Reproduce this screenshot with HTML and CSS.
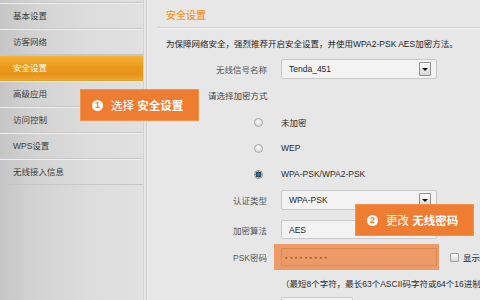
FILE: index.html
```html
<!DOCTYPE html>
<html lang="zh-CN">
<head>
<meta charset="utf-8">
<title>安全设置</title>
<link rel="stylesheet" href="styles.css">
</head>
<body>
<div class="page">
  <aside class="sidebar">
    <div class="nav-top"></div>
    <div class="nav-item">基本设置</div>
    <div class="nav-item">访客网络</div>
    <div class="nav-item active">安全设置</div>
    <div class="nav-item">高级应用</div>
    <div class="nav-item">访问控制</div>
    <div class="nav-item">WPS设置</div>
    <div class="nav-item">无线接入信息</div>
  </aside>
  <div class="divider"></div>
  <main class="main">
    <div class="head"><h1 class="title">安全设置</h1></div>
    <p class="desc">为保障网络安全，强烈推荐开启安全设置，并使用WPA2-PSK AES加密方法。</p>
    <div class="row r-ssid">
      <span class="lbl">无线信号名称</span>
      <div class="select"><span>Tenda_451</span><span class="dd"></span></div>
    </div>
    <p class="sub">请选择加密方式</p>
    <div class="radios">
      <div class="row radio-row"><span class="lbl lbl-radio"><span class="radio"></span></span><span class="opt">未加密</span></div>
      <div class="row radio-row"><span class="lbl lbl-radio"><span class="radio"></span></span><span class="opt">WEP</span></div>
      <div class="row radio-row"><span class="lbl lbl-radio"><span class="radio on"></span></span><span class="opt">WPA-PSK/WPA2-PSK</span></div>
    </div>
    <div class="row r-auth">
      <span class="lbl">认证类型</span>
      <div class="select"><span>WPA-PSK</span><span class="dd"></span></div>
    </div>
    <div class="row r-algo">
      <span class="lbl">加密算法</span>
      <div class="select plain"><span>AES</span></div>
    </div>
    <div class="row r-psk">
      <span class="lbl">PSK密码</span>
      <div class="psk-hl"><div class="psk-input">●●●●●●●●●</div></div>
      <span class="check"></span><span class="check-lbl">显示</span>
    </div>
    <p class="hint">（最短8个字符，最长63个ASCII码字符或64个16进制</p>
    <div class="bottom-box"></div>
  </main>
</div>
<div class="callout c1"><span class="num">1</span><span>选择&nbsp;<b>安全设置</b></span></div>
<div class="callout c2"><span class="num">2</span><span>更改&nbsp;<b>无线密码</b></span></div>
</body>
</html>
```

FILE: styles.css
```css
html, body {
  margin: 0;
  padding: 0;
}
body {
  width: 480px;
  height: 300px;
  overflow: hidden;
  position: relative;
  background: #e7e7e7;
  font-family: "Liberation Sans", "Noto Sans CJK SC", sans-serif;
  font-size: 8.5px;
  color: #2a2a2a;
}
.page {
  display: flex;
  height: 300px;
}
.sidebar {
  width: 143px;
  flex: none;
  background: linear-gradient(to right, #c5c5c5, #d2d2d2 22%, #dcdcdc 60%, #e1e1e1);
}
.nav-top {
  height: 2px;
  border-bottom: 1px solid #c6c6c6;
}
.nav-item {
  height: 24px;
  line-height: 24px;
  padding-left: 13px;
  border-top: 1px solid #f1f1f1;
  border-bottom: 1px solid #c6c6c6;
  color: #3c3c3c;
}
.nav-item.active {
  color: #fff;
  background: linear-gradient(#f4b236, #eb9a1c 45%, #e8931a 75%, #efa72a);
  border-top-color: #f6c35a;
  border-bottom-color: #e0a030;
}
.divider {
  width: 5px;
  flex: none;
  background: linear-gradient(to right, #d3d3d3 0 1px, #e9e9e9 1px 3px, #cacaca 3px 4px, #efefef 4px 5px);
}
.main {
  flex: 1;
  min-width: 0;
  overflow: hidden;
  white-space: nowrap;
}
.head {
  margin-left: 10px;
  padding: 2px 0 0 8px;
  height: 28px;
  box-sizing: border-box;
  border-bottom: 1px solid #d0d0d0;
  box-shadow: 0 1px 0 #f4f4f4;
  display: flex;
  align-items: center;
}
.title {
  margin: 0;
  font-size: 10px;
  font-weight: 500;
  color: #f0962c;
}
.desc {
  margin: 10px 0 0 18px;
  line-height: 12px;
  color: #222;
}
.row {
  display: flex;
  align-items: center;
}
.lbl {
  width: 119px;
  flex: none;
  margin-right: 14px;
  text-align: right;
  color: #555;
}
.lbl-radio {
  display: flex;
  justify-content: flex-end;
  padding-right: 4px;
  box-sizing: border-box;
}
.select {
  width: 156px;
  height: 20px;
  box-sizing: border-box;
  border: 1px solid #c9c9c9;
  border-radius: 2px;
  background: #f3f3f3;
  padding: 0 5px 0 7px;
  display: flex;
  align-items: center;
  justify-content: space-between;
  color: #1e1e1e;
}
.dd {
  width: 12px;
  height: 14px;
  box-sizing: border-box;
  border: 1px solid #8f8f8f;
  border-radius: 1px;
  background: linear-gradient(#fdfdfd, #d6d6d6);
  display: flex;
  align-items: center;
  justify-content: center;
}
.dd::after {
  content: "";
  border-left: 3px solid transparent;
  border-right: 3px solid transparent;
  border-top: 3px solid #111;
}
.r-ssid {
  margin-top: 9px;
  height: 20px;
}
.sub {
  margin: 11px 0 0 60px;
  line-height: 12px;
  color: #444;
}
.radios {
  margin-top: 7px;
}
.radio-row {
  height: 26px;
}
.radio {
  width: 9px;
  height: 9px;
  box-sizing: border-box;
  border-radius: 50%;
  border: 1px solid #a9a9a9;
  background: radial-gradient(circle at 50% 35%, #f8f8f8, #d2d2d2);
}
.radio.on {
  border-color: #8a8a8a;
  background: radial-gradient(circle, #1d73bb 0 1.8px, #3a3a3a 2.2px 2.8px, #e4e4e4 3.2px);
}
.opt {
  color: #2a2a2a;
}
.r-auth {
  margin-top: 3px;
  height: 20px;
}
.r-algo {
  margin-top: 10px;
  height: 19px;
}
.r-algo .select {
  height: 19px;
}
.r-psk {
  margin-top: 5px;
  height: 26px;
}
.psk-hl {
  margin-left: -7px;
  padding: 4px 2px 4px 7px;
  height: 26px;
  box-sizing: border-box;
  background: #ec9b68;
}
.psk-input {
  width: 156px;
  height: 18px;
  box-sizing: border-box;
  border: 1px solid #e2884f;
  padding-left: 3px;
  display: flex;
  align-items: center;
  font-size: 4.5px;
  letter-spacing: 2.2px;
  color: #a9552a;
}
.check {
  margin-left: 11px;
  width: 9px;
  height: 9px;
  box-sizing: border-box;
  border: 1px solid #9e9e9e;
  border-radius: 1px;
  background: linear-gradient(#fafafa, #dadada);
}
.check-lbl {
  margin-left: 4px;
  color: #2a2a2a;
}
.hint {
  margin: 8px 0 0 133px;
  line-height: 12px;
  color: #2a2a2a;
}
.bottom-box {
  margin: 7px 0 0 133px;
  width: 72px;
  height: 20px;
  box-sizing: border-box;
  border: 1px solid #c9c9c9;
  border-radius: 2px;
  background: #f3f3f3;
}
.callout {
  position: absolute;
  width: 119px;
  height: 32px;
  box-sizing: border-box;
  background: #ee7d32;
  border: 1px solid #f1924f;
  color: #fff;
  font-size: 11.5px;
  display: flex;
  align-items: center;
  padding-left: 11px;
  white-space: nowrap;
}
.callout b {
  font-weight: bold;
}
.c1 {
  left: 80px;
  top: 89px;
}
.c2 {
  left: 355px;
  top: 204px;
}
.num {
  width: 11px;
  height: 11px;
  flex: none;
  border-radius: 50%;
  background: #fff;
  color: #ee7d32;
  font-weight: bold;
  font-size: 9px;
  line-height: 11px;
  text-align: center;
  margin-right: 8px;
}
```
